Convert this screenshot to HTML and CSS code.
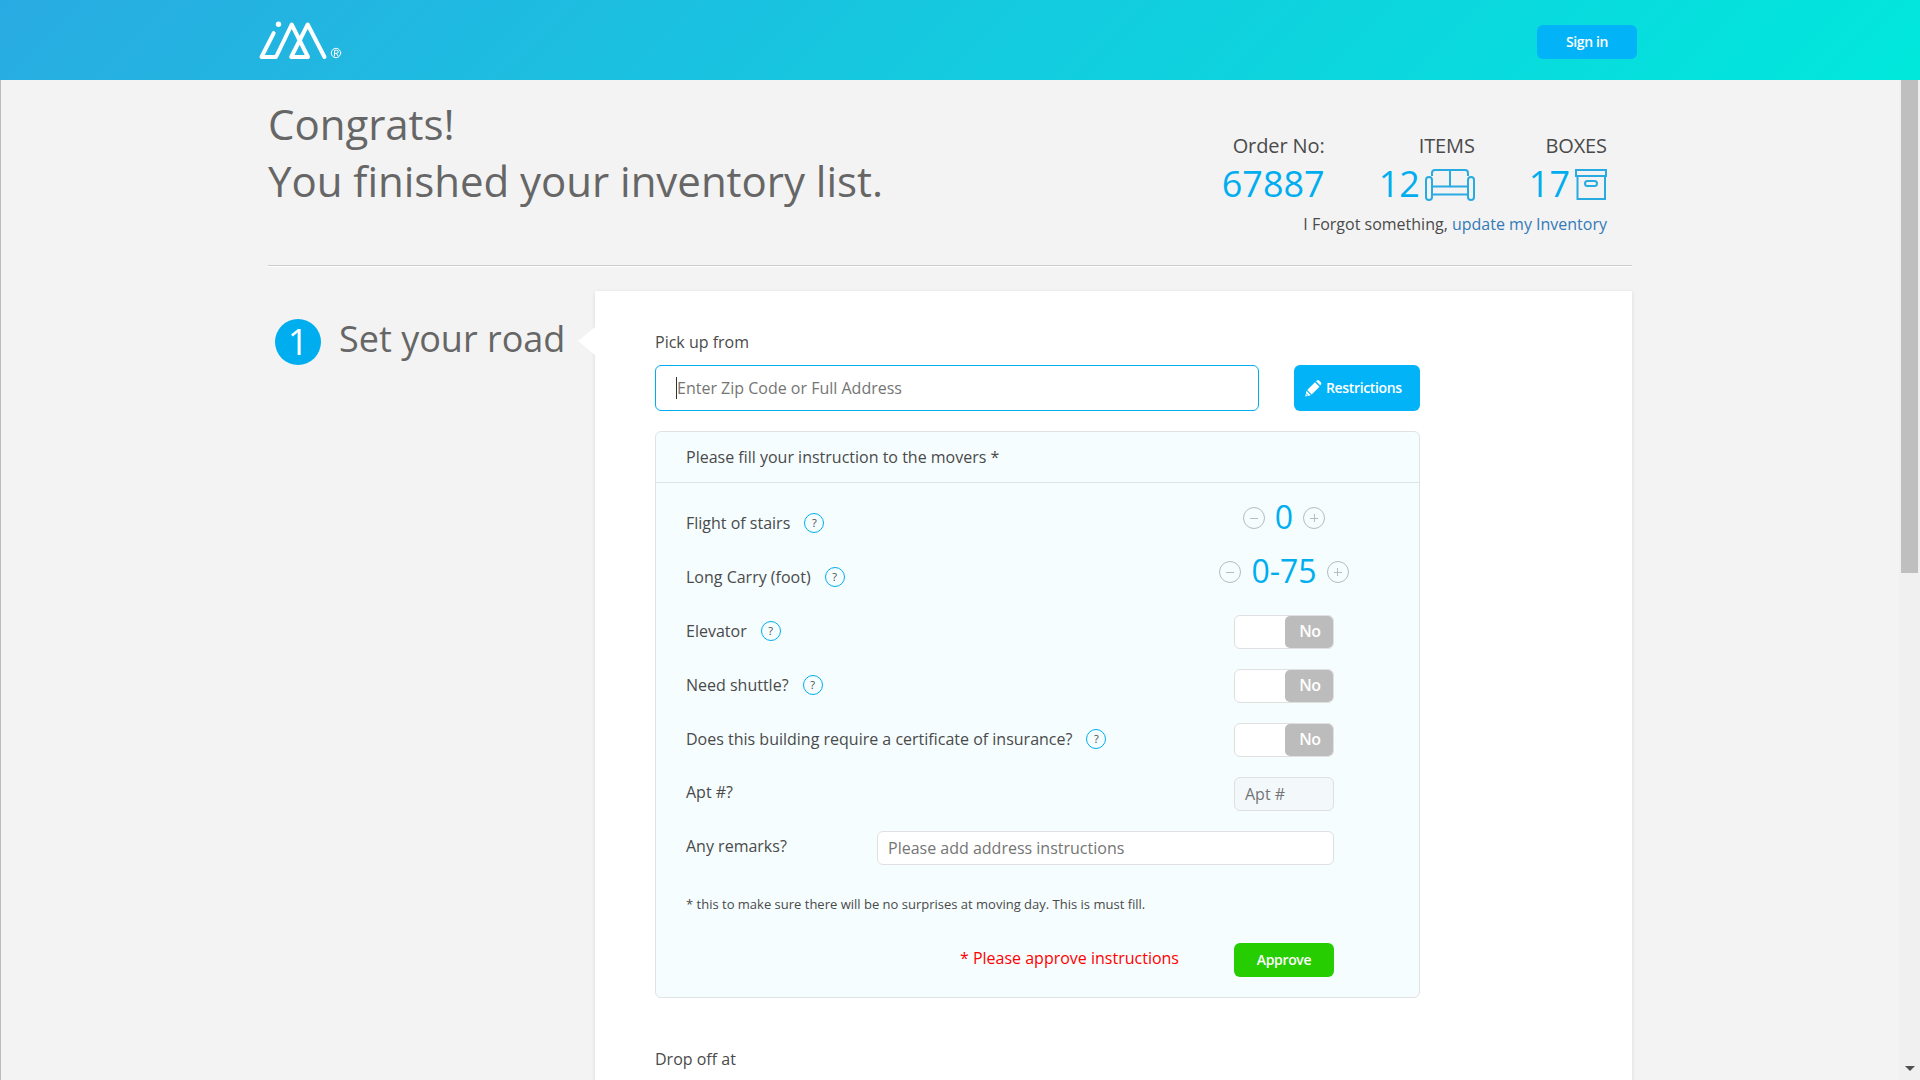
FILE: index.html
```html
<!DOCTYPE html>
<html lang="en">
<head>
<meta charset="utf-8">
<title>Set your road</title>
<link rel="stylesheet" href="styles.css">
</head>
<body>
<header class="topbar">
  <svg class="logo" width="84" height="40" viewBox="0 0 84 40" fill="none" stroke="#fff" stroke-width="4" stroke-linecap="round" stroke-linejoin="round">
    <path d="M15.700 13.200L3.500 37H18L33.700 4.500L50 37H33.200L49.700 4.500L66.500 37"/>
    <circle cx="20.500" cy="4.300" r="2.700" fill="#fff" stroke="none"/>
    <circle cx="78" cy="33" r="4.700" stroke-width="1"/>
    <path d="M76.500 36V30.300H78.700A1.500 1.500 0 0 1 78.700 33.300H76.500M78.500 33.300L80 36" stroke-width="1"/>
  </svg>
  <button class="btn sign-in">Sign in</button>
</header>
<div class="viewport">
  <main class="page">
    <section class="summary">
      <h1>Congrats!<br>You finished your inventory list.</h1>
      <div class="order">
        <div class="stats">
          <div class="stat"><span>Order No:</span><b>67887</b></div>
          <div class="stat"><span>ITEMS</span><b>12<svg class="sofa" width="50" height="32" viewBox="0 0 50 32" fill="none" stroke="#29abe2" stroke-width="2">
            <path d="M7 7V4Q7 1 10 1H40Q43 1 43 4V7M25 1V17M7 17.500H43M7 25.500H43"/>
            <rect x="1" y="8" width="6" height="23" rx="3"/><rect x="43" y="8" width="6" height="23" rx="3"/>
          </svg></b></div>
          <div class="stat"><span>BOXES</span><b>17<svg class="box" width="32" height="31" viewBox="0 0 32 31" fill="none" stroke="#29abe2" stroke-width="2">
            <path d="M1 1H31V7H1ZM2.500 7V30H30V7"/><rect x="10" y="12" width="12" height="5" rx="2.500"/>
          </svg></b></div>
        </div>
        <p class="forgot">I Forgot something, <a>update my Inventory</a></p>
      </div>
    </section>
    <section class="step">
      <h2><span class="number">1</span><span class="title">Set your road</span></h2>
      <div class="card">
        <label class="field-label">Pick up from</label>
        <div class="address">
          <div class="address-input"><i class="caret"></i>Enter Zip Code or Full Address</div>
          <button class="btn restrictions"><svg width="17" height="17" viewBox="0 0 17 17" fill="#fff"><path d="M2.200 10L10 2.200L14.500 6.700L6.700 14.500Z"/><path d="M11 1.200L12 .4Q13.200-.3 14.300.7L16 2.500Q16.700 3.500 15.900 4.600L15.300 5.500Z"/><path d="M1.400 10.800L5.900 15.300L.3 16.400Z"/><path d="M.9 13.500L3 15.600" stroke="#03b3f8" stroke-width=".8"/></svg>Restrictions</button>
        </div>
        <div class="panel">
          <div class="panel-head">Please fill your instruction to the movers *</div>
          <div class="panel-body">
            <div class="row"><span>Flight of stairs</span><i class="help">?</i><div class="control stepper"><i class="minus"></i><span>0</span><i class="plus"></i></div></div>
            <div class="row"><span>Long Carry (foot)</span><i class="help">?</i><div class="control stepper wide"><i class="minus"></i><span>0-75</span><i class="plus"></i></div></div>
            <div class="row"><span>Elevator</span><i class="help">?</i><div class="control toggle"><em>No</em></div></div>
            <div class="row"><span>Need shuttle?</span><i class="help">?</i><div class="control toggle"><em>No</em></div></div>
            <div class="row"><span>Does this building require a certificate of insurance?</span><i class="help">?</i><div class="control toggle"><em>No</em></div></div>
            <div class="row plain"><span>Apt #?</span><div class="control input apt">Apt #</div></div>
            <div class="row plain"><span>Any remarks?</span><div class="control input remarks">Please add address instructions</div></div>
            <p class="note">* this to make sure there will be no surprises at moving day. This is must fill.</p>
            <div class="approve"><span>* Please approve instructions</span><button class="btn green">Approve</button></div>
          </div>
        </div>
        <label class="field-label drop">Drop off at</label>
      </div>
    </section>
  </main>
  <div class="scrollbar"><div class="thumb"></div><div class="arrow"></div></div>
</div>
</body>
</html>
```
FILE: styles.css
```css
* { box-sizing: border-box; }
body { margin: 0; height: 1080px; overflow: hidden; background: #f3f3f3; color: #4a4a4a; font: 400 16px/24px "Open Sans", sans-serif; }
h1, h2, p { margin: 0; font-weight: 400; }
i, em { font-style: normal; }
.btn { border: 0; padding: 0; border-radius: 6px; background: #03b3f8; color: #fff; font: 600 14px/20px "Open Sans", sans-serif; letter-spacing: -.35px; }
.topbar { display: flex; justify-content: space-between; align-items: flex-start; height: 80px; padding: 20px 283px 0 258px; background: linear-gradient(135deg, #29abe2, #00e8dc); }
.logo { display: block; }
.sign-in { width: 100px; height: 34px; margin-top: 5px; }
.viewport { display: flex; height: 1000px; border-left: 1px solid #bbb; overflow: hidden; }
.page { flex: 1; padding-left: 267px; }
.summary { display: flex; justify-content: space-between; width: 1364px; height: 186px; padding: 15px 25px 0 0; border-bottom: 1px solid #ccc; box-shadow: 0 1px 0 #fff; }
h1 { color: #666; font-size: 42px; line-height: 57px; letter-spacing: -.03px; }
.order { padding-top: 36px; text-align: right; }
.stats { display: flex; justify-content: flex-end; }
.stat { display: flex; flex-direction: column; margin-left: 54px; font-size: 20px; line-height: 30px; letter-spacing: -.1px; }
.stat b { display: flex; justify-content: flex-end; align-items: center; height: 46px; color: #00aeef; font-size: 36px; font-weight: 400; letter-spacing: 0; }
.sofa { margin: 2px 0 0 5px; }
.box { margin: 1px 0 0 5px; }
.forgot { margin-top: 5px; }
.forgot a { color: #337ab7; }
.step { display: flex; padding-top: 25px; }
h2 { display: flex; align-items: center; width: 327px; height: 48px; margin-top: 27px; padding-left: 7px; color: #666; font-size: 36px; line-height: 48px; }
.title { margin-top: -7px; }
.number { width: 46px; height: 46px; margin-right: 18px; border-radius: 50%; background: #00aeef; color: #fff; line-height: 46px; text-align: center; }
.card { position: relative; width: 1037px; height: 800px; padding: 39px 0 0 60px; background: #fff; box-shadow: 0 1px 4px rgba(0,0,0,.1); }
.card::before { content: ""; position: absolute; left: -17px; top: 36px; border: solid transparent; border-width: 14px 17px 14px 0; border-right-color: #fff; }
.field-label { display: block; }
.address { display: flex; justify-content: space-between; width: 765px; height: 46px; margin: 11px 0 20px; }
.address-input { display: flex; align-items: center; width: 604px; padding-left: 20px; border: 1px solid #00aeef; border-radius: 6px; background: #fff; color: #757575; }
.caret { width: 1px; height: 22px; background: #333; }
.restrictions { display: flex; align-items: center; gap: 4px; width: 126px; padding-left: 11px; }
.panel { width: 765px; height: 567px; border: 1px solid #e0e3e4; border-radius: 6px; background: #f5fdff; }
.panel-head { height: 51px; padding: 13px 30px; border-bottom: 1px solid #e0e3e4; }
.panel-body { padding: 13px 85px 0 30px; }
.row { display: flex; align-items: center; height: 54px; }
.plain > span { margin-top: -2px; }
.help { width: 20px; height: 20px; margin-left: 14px; border: 1px solid #00aeef; border-radius: 50%; font-size: 11px; line-height: 18px; text-align: center; }
.control { margin-left: auto; }
.stepper { display: flex; justify-content: center; align-items: center; gap: 10px; width: 100px; margin-bottom: 10px; color: #00aeef; font-size: 32px; line-height: 44px; }
.stepper span { margin-top: -2px; }
.wide { width: 130px; margin-right: -15px; }
.minus, .plus { flex: none; width: 22px; height: 22px; border: 1px solid #b7bcbd; border-radius: 50%; background: linear-gradient(#b7bcbd, #b7bcbd) center / 8px 1px no-repeat; }
.plus { background: linear-gradient(#b7bcbd, #b7bcbd) center / 8px 1px no-repeat, linear-gradient(#b7bcbd, #b7bcbd) center / 1px 8px no-repeat; }
.toggle, .input { height: 34px; margin-top: 2px; border: 1px solid #e0e0e0; border-radius: 6px; background: #fff; }
.toggle { display: flex; justify-content: flex-end; width: 100px; }
.toggle em { width: 48px; padding-left: 2px; border-radius: 5px; background: #bcbcbc; color: #fff; font-weight: 600; letter-spacing: -.3px; line-height: 31px; text-align: center; }
.input { padding: 4px 11px 4px 10px; color: #757575; }
.apt { width: 100px; background: #f3f8fb; }
.remarks { width: 457px; }
.note { margin-top: 20px; font-size: 13px; line-height: 20px; }
.approve { display: flex; justify-content: flex-end; align-items: center; gap: 55px; margin-top: 29px; height: 34px; color: #f00; }
.approve span { margin-top: -4px; }
.green { width: 100px; height: 34px; background: #26cd00; }
.drop { margin-top: 49px; }
.scrollbar { display: flex; flex-direction: column; justify-content: space-between; align-items: center; width: 21px; padding: 0 0 9px; background: #f0f0f0; }
.thumb { width: 17px; height: 493px; background: #bfbfbf; }
.arrow { border: solid transparent; border-width: 5px 5px 0; border-top-color: #505050; }
```
